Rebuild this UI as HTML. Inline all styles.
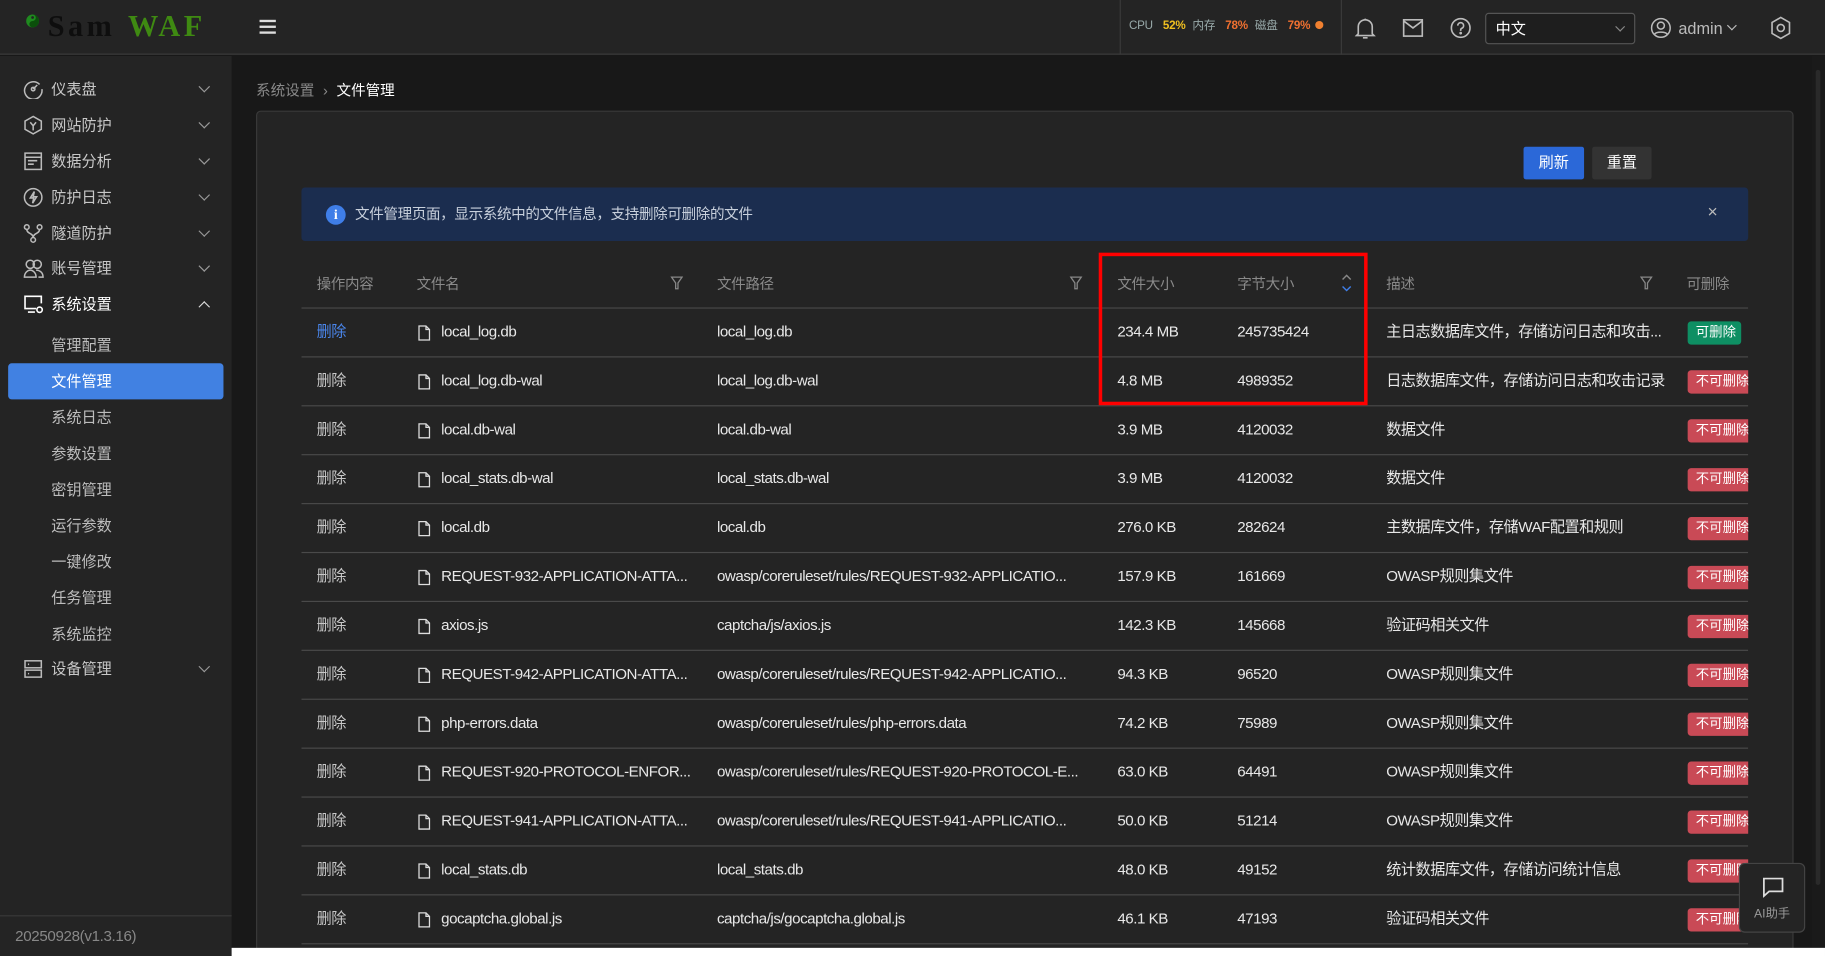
<!DOCTYPE html>
<html><head><meta charset="utf-8">
<style>
*{box-sizing:border-box;margin:0;padding:0}
html,body{width:1825px;height:956px;overflow:hidden;background:#181818}
#w{position:absolute;left:0;top:0;width:1568px;height:821px;transform:scale(1.16390,1.16443);transform-origin:0 0;background:#181818;font-family:"Liberation Sans","Noto Sans CJK SC",sans-serif;font-size:13px;line-height:16px;color:#e6e6e6;overflow:hidden}
.abs{position:absolute}
#hdr{left:0;top:0;width:1568px;height:47px;background:#242424;border-bottom:1px solid #3c3c3c}
#side{left:0;top:48px;width:199px;height:773px;background:#242424}
.mi{position:absolute;left:20px;height:20px;line-height:20px;color:#c8c8c8;font-size:13px}
.mi svg{position:absolute;left:0;top:1px}
.mi span{position:absolute;left:24px;white-space:nowrap}
.chev{position:absolute;left:172px;width:7px;height:7px;border-right:1.2px solid #999;border-bottom:1.2px solid #999;transform:rotate(45deg)}
.sub{position:absolute;left:44px;color:#bdbdbd;font-size:13px;line-height:16px}
#card{left:220px;top:95px;width:1321px;height:740px;background:#242424;border:1px solid #3a3a3a;border-radius:4px}
.th{position:absolute;top:236px;color:#8a8a8a;font-size:12.5px;line-height:16px;letter-spacing:-.3px}
#tbl{position:absolute;left:259px;top:264px;width:1243px;height:557px;overflow:hidden}
.row{position:absolute;left:0;width:1243px;height:42px;border-top:1px solid #4a4a4a;letter-spacing:-.4px}
.row div{position:absolute;top:12px;white-space:nowrap;color:#e8e8e8;line-height:16px}
.del{left:13px;color:#c8c8c8!important}
.fi{left:100px;top:14px!important}
.tag{position:absolute;left:1191px;top:11px!important;height:20px;line-height:20px!important;padding:0 0 0 7px;font-size:11.5px;color:#fff!important;border-radius:3px;background:#c94a56;width:60px;letter-spacing:0}
.tag.g{background:#0e8f63;width:46px}
.flt{position:absolute;top:237px}
</style></head><body><div id="w">
<div id="hdr" class="abs">
  <svg class="abs" style="left:22px;top:12px" width="12" height="12" viewBox="0 0 12 12"><circle cx="6" cy="6" r="5.5" fill="#1f8a1f"/><circle cx="6" cy="3" r="1.2" fill="#242424"/><path d="M6 .5a2.75 2.75 0 0 1 0 5.5a2.75 2.75 0 0 0 0 5.5a5.5 5.5 0 0 0 0-11z" fill="#0b4f0b"/></svg>
  <div class="abs" style="left:41px;top:8px;font-family:'Liberation Serif',serif;font-weight:bold;font-size:26px;letter-spacing:3px;color:#0e0e0e;line-height:30px">Sam</div>
  <div class="abs" style="left:110px;top:8px;font-family:'Liberation Serif',serif;font-weight:bold;font-size:26px;letter-spacing:3px;color:#3f8a12;line-height:30px">WAF</div>
  <div class="abs" style="left:223px;top:17px;width:14px;height:2px;background:#ddd;box-shadow:0 5px 0 #ddd,0 10px 0 #ddd"></div>
  <div class="abs" style="left:962px;top:0;width:1px;height:47px;background:#3a3a3a"></div>
  <div class="abs" style="left:1152px;top:0;width:1px;height:47px;background:#3a3a3a"></div>
  <div class="abs" style="left:970px;top:17px;font-size:10px;line-height:12px;color:#9aa;white-space:nowrap;letter-spacing:-.2px">CPU <b style="color:#f0c020;margin:0 6px 0 6px">52%</b>内存 <b style="color:#f07030;margin:0 6px 0 6px">78%</b>磁盘 <b style="color:#f07030;margin:0 4px 0 6px">79%</b><span style="display:inline-block;width:7px;height:7px;border-radius:50%;background:#f08030"></span></div>
  <svg class="abs" style="left:1164px;top:14px" width="18" height="20" viewBox="0 0 18 20" fill="none" stroke="#bbb" stroke-width="1.4"><path d="M3 15V9a6 6 0 0 1 12 0v6l1.5 1.5h-15z"/><path d="M7 18.5h4"/><path d="M9 2v1"/></svg>
  <svg class="abs" style="left:1205px;top:16px" width="18" height="16" viewBox="0 0 18 16" fill="none" stroke="#bbb" stroke-width="1.4"><rect x="1" y="1" width="16" height="14"/><path d="M1 2l8 6 8-6"/></svg>
  <svg class="abs" style="left:1246px;top:15px" width="18" height="18" viewBox="0 0 18 18" fill="none" stroke="#bbb" stroke-width="1.4"><circle cx="9" cy="9" r="8"/><path d="M6.5 7a2.5 2.5 0 1 1 3.5 2.3c-.7.3-1 .8-1 1.5v.7"/><circle cx="9" cy="13.5" r=".5" fill="#bbb"/></svg>
  <div class="abs" style="left:1276px;top:11px;width:129px;height:27px;border:1px solid #555;border-radius:3px;background:#1e1e1e"><span class="abs" style="left:8px;top:5px;color:#fff;font-size:13px;line-height:16px">中文</span><div class="abs" style="left:112px;top:8px;width:6px;height:6px;border-right:1px solid #888;border-bottom:1px solid #888;transform:rotate(45deg)"></div></div>
  <svg class="abs" style="left:1418px;top:15px" width="18" height="18" viewBox="0 0 18 18" fill="none" stroke="#bbb" stroke-width="1.3"><circle cx="9" cy="9" r="8"/><circle cx="9" cy="7" r="3"/><path d="M3.5 14.5c1.5-2.5 9.5-2.5 11 0"/></svg>
  <div class="abs" style="left:1442px;top:16px;font-size:14px;color:#bbb">admin</div>
  <div class="abs" style="left:1485px;top:19px;width:6px;height:6px;border-right:1.2px solid #bbb;border-bottom:1.2px solid #bbb;transform:rotate(45deg)"></div>
  <svg class="abs" style="left:1521px;top:14px" width="18" height="20" viewBox="0 0 18 20" fill="none" stroke="#bbb" stroke-width="1.4"><path d="M9 1l7.5 4.3v9.4L9 19l-7.5-4.3V5.3z"/><circle cx="9" cy="10" r="3"/></svg>
</div>

<div id="side" class="abs">
  <div class="mi" style="top:19px"><svg width="17" height="17" viewBox="0 0 17 17" fill="none" stroke="#bbb" stroke-width="1.3"><path d="M14 4.5A7.5 7.5 0 1 0 16 8.5"/><path d="M8.5 8.5l3.5-3.5"/><circle cx="8.5" cy="8.5" r="1.5"/></svg><span>仪表盘</span></div><div class="chev" style="top:23px"></div>
  <div class="mi" style="top:50px"><svg width="17" height="17" viewBox="0 0 17 17" fill="none" stroke="#bbb" stroke-width="1.3"><path d="M8.5 1l7 4v7l-7 4-7-4V5z"/><path d="M6 6l2.5 3 2.5-3M8.5 9v4"/></svg><span>网站防护</span></div><div class="chev" style="top:54px"></div>
  <div class="mi" style="top:81px"><svg width="17" height="17" viewBox="0 0 17 17" fill="none" stroke="#bbb" stroke-width="1.3"><rect x="1.5" y="1.5" width="14" height="14"/><path d="M1.5 5h14M4 8h8M4 11h5"/></svg><span>数据分析</span></div><div class="chev" style="top:85px"></div>
  <div class="mi" style="top:112px"><svg width="17" height="17" viewBox="0 0 17 17" fill="none" stroke="#bbb" stroke-width="1.3"><circle cx="8.5" cy="8.5" r="7.5"/><path d="M9.5 3.5L6 9h3l-1 4.5L11.5 8h-3z"/></svg><span>防护日志</span></div><div class="chev" style="top:116px"></div>
  <div class="mi" style="top:143px"><svg width="17" height="17" viewBox="0 0 17 17" fill="none" stroke="#bbb" stroke-width="1.3"><circle cx="3" cy="3" r="2"/><circle cx="14" cy="3" r="2"/><circle cx="8.5" cy="14" r="2"/><path d="M3 5c0 4 5.5 3 5.5 7M14 5c0 4-5.5 3-5.5 7"/></svg><span>隧道防护</span></div><div class="chev" style="top:147px"></div>
  <div class="mi" style="top:173px"><svg width="18" height="17" viewBox="0 0 18 17" fill="none" stroke="#bbb" stroke-width="1.3"><circle cx="6" cy="5" r="3.5"/><circle cx="12" cy="5" r="3.5"/><path d="M1 16c0-4 3-6 5-6s5 2 5 6zM11 10c2 0 6 1 6 6h-4"/></svg><span>账号管理</span></div><div class="chev" style="top:177px"></div>
  <div class="mi" style="top:204px;color:#fff"><svg width="18" height="17" viewBox="0 0 18 17" fill="none" stroke="#fff" stroke-width="1.4"><path d="M11 12H1.5V1.5h14v6"/><path d="M4 15h6"/><circle cx="14" cy="13" r="2.3"/></svg><span>系统设置</span></div><div class="chev" style="top:212px;transform:rotate(225deg);border-color:#ddd"></div>
  <div class="sub" style="top:241px">管理配置</div>
  <div class="abs" style="left:7px;top:264px;width:185px;height:31px;background:#4181e2;border-radius:3px"></div>
  <div class="sub" style="top:272px;color:#fff">文件管理</div>
  <div class="sub" style="top:303px">系统日志</div>
  <div class="sub" style="top:334px">参数设置</div>
  <div class="sub" style="top:365px">密钥管理</div>
  <div class="sub" style="top:396px">运行参数</div>
  <div class="sub" style="top:427px">一键修改</div>
  <div class="sub" style="top:458px">任务管理</div>
  <div class="sub" style="top:489px">系统监控</div>
  <div class="mi" style="top:517px"><svg width="17" height="17" viewBox="0 0 17 17" fill="none" stroke="#bbb" stroke-width="1.3"><rect x="1.5" y="1.5" width="14" height="6"/><rect x="1.5" y="9.5" width="14" height="6"/><path d="M4 4.5h1M4 12.5h1"/></svg><span>设备管理</span></div><div class="chev" style="top:521px"></div>
  <div class="abs" style="left:0;top:738px;width:199px;height:1px;background:#3a3a3a"></div>
  <div class="abs" style="left:13px;top:748px;color:#888;font-size:13px;letter-spacing:-.3px">20250928(v1.3.16)</div>
</div>

<div class="abs" style="left:220px;top:70px;font-size:12.5px;color:#8a8a8a">系统设置 <span style="margin:0 4px">›</span> <span style="color:#fff">文件管理</span></div>
<div id="card" class="abs"></div>
<div class="abs" style="left:1309px;top:126px;width:52px;height:28px;background:#2b68d8;border-radius:2px;color:#fff;text-align:center;line-height:28px">刷新</div>
<div class="abs" style="left:1368px;top:126px;width:51px;height:28px;background:#333;border-radius:2px;color:#fff;text-align:center;line-height:28px">重置</div>
<div class="abs" style="left:259px;top:161px;width:1243px;height:46px;background:#1b2d4f;border-radius:3px">
  <div class="abs" style="left:21px;top:15px;width:17px;height:17px;border-radius:50%;background:#3f7ee8;color:#fff;font-size:12px;font-weight:bold;text-align:center;line-height:17px;font-family:'Liberation Serif',serif">i</div>
  <div class="abs" style="left:46px;top:15px;color:#c8d0dc;font-size:12.5px;letter-spacing:-.3px">文件管理页面，显示系统中的文件信息，支持删除可删除的文件</div>
  <div class="abs" style="left:1208px;top:14px;color:#bbb;font-size:15px">×</div>
</div>

<div class="th" style="left:272px">操作内容</div>
<div class="th" style="left:358px">文件名</div>
<div class="th" style="left:616px">文件路径</div>
<div class="th" style="left:960px">文件大小</div>
<div class="th" style="left:1063px">字节大小</div>
<div class="th" style="left:1191px">描述</div>
<div class="th" style="left:1449px">可删除</div>
<svg class="flt" style="left:576px" width="11" height="12" viewBox="0 0 11 12" fill="none" stroke="#888" stroke-width="1.1"><path d="M1 1h9L6.5 6v5h-2V6z"/></svg>
<svg class="flt" style="left:919px" width="11" height="12" viewBox="0 0 11 12" fill="none" stroke="#888" stroke-width="1.1"><path d="M1 1h9L6.5 6v5h-2V6z"/></svg>
<svg class="flt" style="left:1409px" width="11" height="12" viewBox="0 0 11 12" fill="none" stroke="#888" stroke-width="1.1"><path d="M1 1h9L6.5 6v5h-2V6z"/></svg>
<svg class="abs" style="left:1152px;top:235px" width="10" height="17" viewBox="0 0 10 17" fill="none" stroke-width="1.2"><path d="M1.5 5l3.5-3.5L8.5 5" stroke="#888"/><path d="M1.5 11l3.5 3.5 3.5-3.5" stroke="#3f7ee8"/></svg>

<div id="tbl">
<div class="row" style="top:0px"><div class="del" style="color:#4a86ec!important">删除</div><div class="fi"><svg width="11" height="14" viewBox="0 0 11 14" fill="none" stroke="#ddd" stroke-width="1.1"><path d="M1 1h6l3 3v9H1z"/><path d="M7 1v3h3"/></svg></div><div style="left:120px">local_log.db</div><div style="left:357px">local_log.db</div><div style="left:701px">234.4 MB</div><div style="left:804px">245735424</div><div style="left:932px">主日志数据库文件，存储访问日志和攻击...</div><div class="tag g">可删除</div></div>
<div class="row" style="top:42px"><div class="del">删除</div><div class="fi"><svg width="11" height="14" viewBox="0 0 11 14" fill="none" stroke="#ddd" stroke-width="1.1"><path d="M1 1h6l3 3v9H1z"/><path d="M7 1v3h3"/></svg></div><div style="left:120px">local_log.db-wal</div><div style="left:357px">local_log.db-wal</div><div style="left:701px">4.8 MB</div><div style="left:804px">4989352</div><div style="left:932px">日志数据库文件，存储访问日志和攻击记录</div><div class="tag">不可删除</div></div>
<div class="row" style="top:84px"><div class="del">删除</div><div class="fi"><svg width="11" height="14" viewBox="0 0 11 14" fill="none" stroke="#ddd" stroke-width="1.1"><path d="M1 1h6l3 3v9H1z"/><path d="M7 1v3h3"/></svg></div><div style="left:120px">local.db-wal</div><div style="left:357px">local.db-wal</div><div style="left:701px">3.9 MB</div><div style="left:804px">4120032</div><div style="left:932px">数据文件</div><div class="tag">不可删除</div></div>
<div class="row" style="top:126px"><div class="del">删除</div><div class="fi"><svg width="11" height="14" viewBox="0 0 11 14" fill="none" stroke="#ddd" stroke-width="1.1"><path d="M1 1h6l3 3v9H1z"/><path d="M7 1v3h3"/></svg></div><div style="left:120px">local_stats.db-wal</div><div style="left:357px">local_stats.db-wal</div><div style="left:701px">3.9 MB</div><div style="left:804px">4120032</div><div style="left:932px">数据文件</div><div class="tag">不可删除</div></div>
<div class="row" style="top:168px"><div class="del">删除</div><div class="fi"><svg width="11" height="14" viewBox="0 0 11 14" fill="none" stroke="#ddd" stroke-width="1.1"><path d="M1 1h6l3 3v9H1z"/><path d="M7 1v3h3"/></svg></div><div style="left:120px">local.db</div><div style="left:357px">local.db</div><div style="left:701px">276.0 KB</div><div style="left:804px">282624</div><div style="left:932px">主数据库文件，存储WAF配置和规则</div><div class="tag">不可删除</div></div>
<div class="row" style="top:210px"><div class="del">删除</div><div class="fi"><svg width="11" height="14" viewBox="0 0 11 14" fill="none" stroke="#ddd" stroke-width="1.1"><path d="M1 1h6l3 3v9H1z"/><path d="M7 1v3h3"/></svg></div><div style="left:120px">REQUEST-932-APPLICATION-ATTA...</div><div style="left:357px">owasp/coreruleset/rules/REQUEST-932-APPLICATIO...</div><div style="left:701px">157.9 KB</div><div style="left:804px">161669</div><div style="left:932px">OWASP规则集文件</div><div class="tag">不可删除</div></div>
<div class="row" style="top:252px"><div class="del">删除</div><div class="fi"><svg width="11" height="14" viewBox="0 0 11 14" fill="none" stroke="#ddd" stroke-width="1.1"><path d="M1 1h6l3 3v9H1z"/><path d="M7 1v3h3"/></svg></div><div style="left:120px">axios.js</div><div style="left:357px">captcha/js/axios.js</div><div style="left:701px">142.3 KB</div><div style="left:804px">145668</div><div style="left:932px">验证码相关文件</div><div class="tag">不可删除</div></div>
<div class="row" style="top:294px"><div class="del">删除</div><div class="fi"><svg width="11" height="14" viewBox="0 0 11 14" fill="none" stroke="#ddd" stroke-width="1.1"><path d="M1 1h6l3 3v9H1z"/><path d="M7 1v3h3"/></svg></div><div style="left:120px">REQUEST-942-APPLICATION-ATTA...</div><div style="left:357px">owasp/coreruleset/rules/REQUEST-942-APPLICATIO...</div><div style="left:701px">94.3 KB</div><div style="left:804px">96520</div><div style="left:932px">OWASP规则集文件</div><div class="tag">不可删除</div></div>
<div class="row" style="top:336px"><div class="del">删除</div><div class="fi"><svg width="11" height="14" viewBox="0 0 11 14" fill="none" stroke="#ddd" stroke-width="1.1"><path d="M1 1h6l3 3v9H1z"/><path d="M7 1v3h3"/></svg></div><div style="left:120px">php-errors.data</div><div style="left:357px">owasp/coreruleset/rules/php-errors.data</div><div style="left:701px">74.2 KB</div><div style="left:804px">75989</div><div style="left:932px">OWASP规则集文件</div><div class="tag">不可删除</div></div>
<div class="row" style="top:378px"><div class="del">删除</div><div class="fi"><svg width="11" height="14" viewBox="0 0 11 14" fill="none" stroke="#ddd" stroke-width="1.1"><path d="M1 1h6l3 3v9H1z"/><path d="M7 1v3h3"/></svg></div><div style="left:120px">REQUEST-920-PROTOCOL-ENFOR...</div><div style="left:357px">owasp/coreruleset/rules/REQUEST-920-PROTOCOL-E...</div><div style="left:701px">63.0 KB</div><div style="left:804px">64491</div><div style="left:932px">OWASP规则集文件</div><div class="tag">不可删除</div></div>
<div class="row" style="top:420px"><div class="del">删除</div><div class="fi"><svg width="11" height="14" viewBox="0 0 11 14" fill="none" stroke="#ddd" stroke-width="1.1"><path d="M1 1h6l3 3v9H1z"/><path d="M7 1v3h3"/></svg></div><div style="left:120px">REQUEST-941-APPLICATION-ATTA...</div><div style="left:357px">owasp/coreruleset/rules/REQUEST-941-APPLICATIO...</div><div style="left:701px">50.0 KB</div><div style="left:804px">51214</div><div style="left:932px">OWASP规则集文件</div><div class="tag">不可删除</div></div>
<div class="row" style="top:462px"><div class="del">删除</div><div class="fi"><svg width="11" height="14" viewBox="0 0 11 14" fill="none" stroke="#ddd" stroke-width="1.1"><path d="M1 1h6l3 3v9H1z"/><path d="M7 1v3h3"/></svg></div><div style="left:120px">local_stats.db</div><div style="left:357px">local_stats.db</div><div style="left:701px">48.0 KB</div><div style="left:804px">49152</div><div style="left:932px">统计数据库文件，存储访问统计信息</div><div class="tag">不可删除</div></div>
<div class="row" style="top:504px"><div class="del">删除</div><div class="fi"><svg width="11" height="14" viewBox="0 0 11 14" fill="none" stroke="#ddd" stroke-width="1.1"><path d="M1 1h6l3 3v9H1z"/><path d="M7 1v3h3"/></svg></div><div style="left:120px">gocaptcha.global.js</div><div style="left:357px">captcha/js/gocaptcha.global.js</div><div style="left:701px">46.1 KB</div><div style="left:804px">47193</div><div style="left:932px">验证码相关文件</div><div class="tag">不可删除</div></div>
<div class="abs" style="left:0;top:546px;width:1243px;height:1px;background:#4a4a4a"></div>
</div>

<div class="abs" style="left:944px;top:217px;width:231px;height:131px;border:3px solid #f00"></div>

<div class="abs" style="left:1494px;top:741px;width:57px;height:60px;background:#242424;border:1px solid #444;border-radius:5px">
  <svg class="abs" style="left:19px;top:11px" width="19" height="18" viewBox="0 0 19 18" fill="none" stroke="#ddd" stroke-width="1.5"><path d="M1.5 1.5h16v11H6l-4.5 4z"/></svg>
  <div class="abs" style="left:0;top:35px;width:55px;text-align:center;font-size:10.5px;color:#999">AI助手</div>
</div>
<div class="abs" style="left:1557px;top:48px;width:11px;height:773px;background:#1a1a1a"></div>
<div class="abs" style="left:1560px;top:60px;width:4px;height:700px;background:#2a2a2a;border-radius:2px"></div>
<div class="abs" style="left:199px;top:814px;width:1369px;height:7px;background:#fff"></div>
</div></body></html>
